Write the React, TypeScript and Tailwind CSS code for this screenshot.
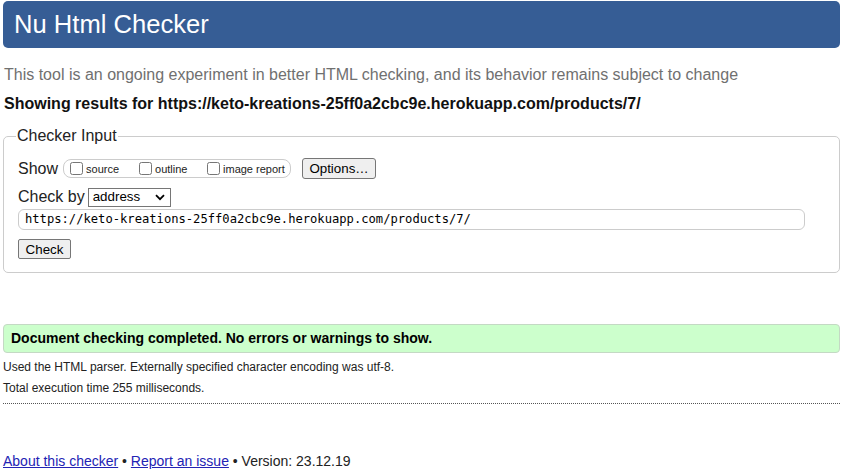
export default function App() {
  return (
    <div className="min-h-[476px] bg-white font-['Liberation_Sans',Arial,sans-serif] text-[#111]">
      {/* Header */}
      <div className="mx-[3px] mt-[1px] flex h-[47px] items-center rounded-[5px] bg-[#365d95] pl-[11px] text-[25.6px] text-white">
        Nu Html Checker
      </div>

      <p className="mt-[18px] px-[4px] text-[16px] leading-[18px] text-[#707070]">
        This tool is an ongoing experiment in better HTML checking, and its behavior remains subject to change
      </p>
      <p className="mt-[11px] px-[4px] text-[16px] font-bold leading-[18px] text-[#111]">
        Showing results for https://keto-kreations-25ff0a2cbc9e.herokuapp.com/products/7/
      </p>

      {/* Checker input */}
      <fieldset className="mx-[3px] mt-[14px] rounded-[5px] border border-[#cccccc] px-[14px] pb-[13px]">
        <legend className="ml-[-2px] px-[1px] text-[16px] leading-[18px] text-[#222]">Checker Input</legend>

        <div className="mt-[12px] flex h-[23px] items-center">
          <span className="text-[16px] text-[#222]">Show</span>
          <div className="ml-[5px] flex h-[19px] w-[228px] items-center rounded-[8px] border border-[#cccccc] pl-[6px] text-[11px] text-[#222]">
            <label className="flex w-[69px] items-center">
              <input type="checkbox" className="m-0 h-[13px] w-[13px]" />
              <span className="ml-[3px] mt-[2px]">source</span>
            </label>
            <label className="flex w-[68px] items-center">
              <input type="checkbox" className="m-0 h-[13px] w-[13px]" />
              <span className="ml-[3px] mt-[2px]">outline</span>
            </label>
            <label className="flex items-center">
              <input type="checkbox" className="m-0 h-[13px] w-[13px]" />
              <span className="ml-[3px] mt-[2px]">image report</span>
            </label>
          </div>
          <button className="ml-[11px] h-[21px] w-[74px] rounded-[3px] border border-[#767676] bg-[#efefef] text-[13.33px] text-black">
            Options…
          </button>
        </div>

        <div className="mt-[7px] flex h-[20px] items-center">
          <span className="text-[16px] text-[#222]">Check by</span>
          <div className="ml-[3px] flex h-[19px] w-[83px] items-center justify-between border border-[#767676] pl-[4px] pr-[5px] text-[13.33px] text-black">
            <span>address</span>
            <svg width="10" height="7" viewBox="0 0 10 7">
              <path d="M1 1.2 L5 5.2 L9 1.2" fill="none" stroke="#000" strokeWidth="1.8" />
            </svg>
          </div>
        </div>

        <div className="mt-[2px] flex h-[21px] w-[787px] items-center rounded-[6px] border border-[#cccccc] pl-[6px] font-['DejaVu_Sans_Mono',monospace] text-[12.15px] text-black">
          https://keto-kreations-25ff0a2cbc9e.herokuapp.com/products/7/
        </div>

        <button className="mt-[9px] block h-[20px] w-[53px] rounded-[2px] border border-[#767676] bg-[#efefef] text-[13.33px] text-black">
          Check
        </button>
      </fieldset>

      {/* Result */}
      <div className="mx-[3px] mt-[51px] flex h-[29px] items-center rounded-[4px] border border-[#c4d9c4] bg-[#ccffcc] px-[7px] text-[14px] font-bold text-black">
        Document checking completed. No errors or warnings to show.
      </div>
      <p className="mt-[7px] px-[3px] text-[12px] leading-[14px] text-[#222]">
        Used the HTML parser. Externally specified character encoding was utf-8.
      </p>
      <p className="mt-[7px] px-[3px] text-[12px] leading-[14px] text-[#222]">Total execution time 255 milliseconds.</p>
      <div className="mx-[3px] mt-[8px] border-t border-dotted border-[#555]" />

      <p className="mt-[49px] px-[3px] text-[14px] leading-[16px] text-[#222]">
        <a href="#" className="text-[#2323b4] underline">About this checker</a>
        {" • "}
        <a href="#" className="text-[#2323b4] underline">Report an issue</a>
        {" • Version: 23.12.19"}
      </p>
    </div>
  );
}
